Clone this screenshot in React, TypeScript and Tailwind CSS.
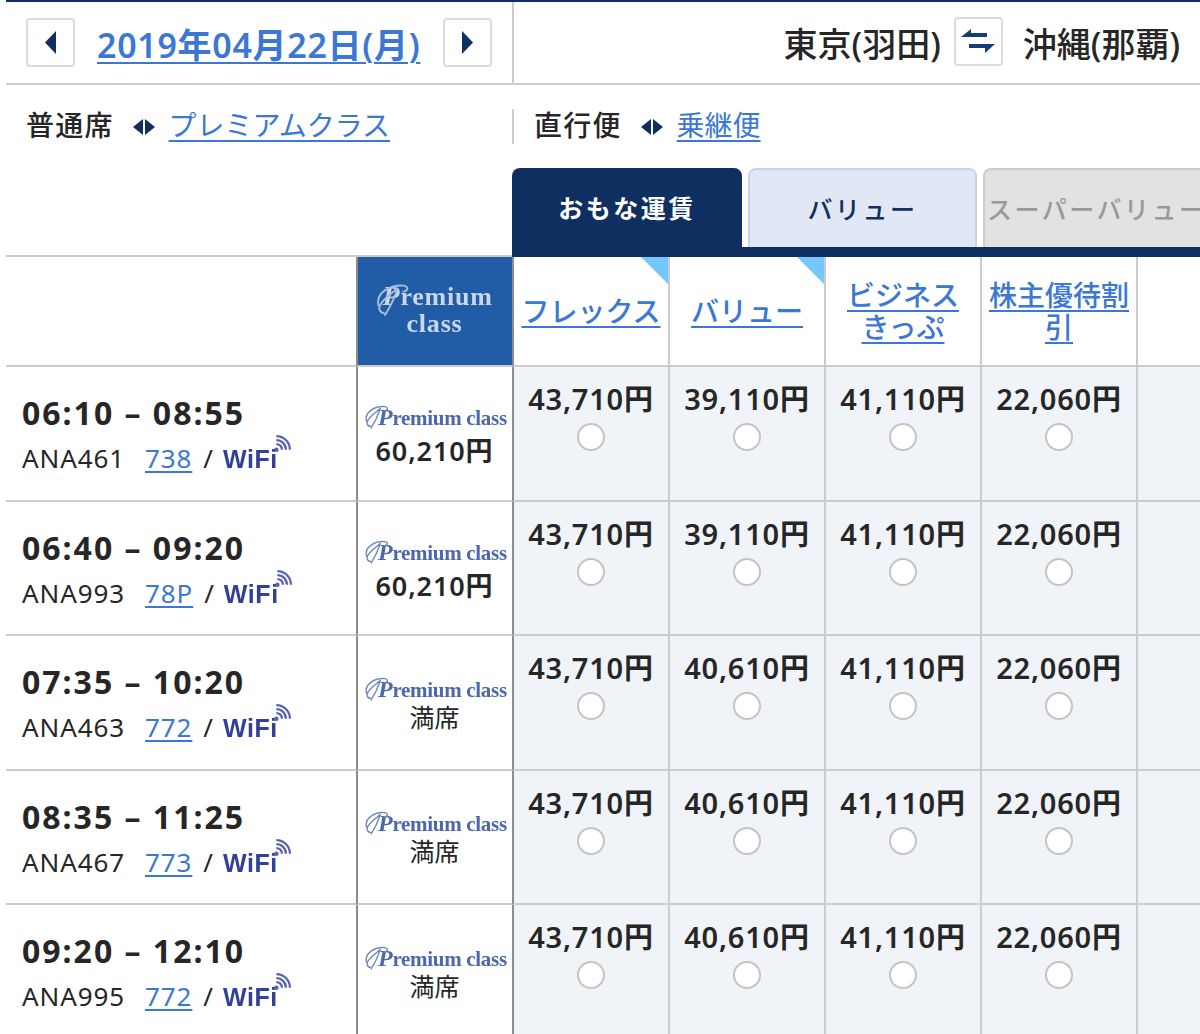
import React from "react";

const rows = [
  { time: "06:10 – 08:55", no: "ANA461", ac: "738", prem: "60,210円", v: "39,110円" },
  { time: "06:40 – 09:20", no: "ANA993", ac: "78P", prem: "60,210円", v: "39,110円" },
  { time: "07:35 – 10:20", no: "ANA463", ac: "772", prem: "満席", v: "40,610円" },
  { time: "08:35 – 11:25", no: "ANA467", ac: "773", prem: "満席", v: "40,610円" },
  { time: "09:20 – 12:10", no: "ANA995", ac: "772", prem: "満席", v: "40,610円" },
];

function Btn({ children }: { children: React.ReactNode }) {
  return (
    <div className="w-[49px] h-[49px] bg-white border-2 border-[#dcdcdc] rounded-[4px] flex items-center justify-center shrink-0">
      {children}
    </div>
  );
}

function Tri({ dir, w, h }: { dir: "l" | "r"; w: number; h: number }) {
  return (
    <svg width={w} height={h} viewBox="0 0 10 20" preserveAspectRatio="none">
      <polygon points={dir === "l" ? "10,0 10,20 0,10" : "0,0 0,20 10,10"} fill="#0f2f60" />
    </svg>
  );
}

function Both() {
  return (
    <div className="flex gap-[2px] items-center ml-[19px] mr-[14px]">
      <Tri dir="l" w={10} h={16} />
      <Tri dir="r" w={10} h={16} />
    </div>
  );
}

function Swirl({ size, color }: { size: number; color: string }) {
  return (
    <svg width={size} height={size} viewBox="0 0 30 30" className="absolute left-0 top-0">
      <path d="M3 20 C0 9 13 2 24 3 C29 4 27 8 23 8 M8 26 C4 26 2 22 5 18 C9 12 16 8 19 5 M19 5 C16 14 12 22 8 28" fill="none" stroke={color} strokeWidth="1.6" />
    </svg>
  );
}

function SmallLogo() {
  return (
    <div className="relative h-[26px] w-[141px] text-[#4c67ab] blur-[0.5px] font-['Liberation_Serif',serif] font-bold text-[21px] leading-[26px] text-left pl-[14px] whitespace-nowrap tracking-[-0.3px]">
      <Swirl size={26} color="#6f86bd" />
      <span className="italic text-[24px]">P</span>remium class
    </div>
  );
}

function WiFi() {
  return (
    <span className="relative inline-block text-[#33409a] blur-[0.3px] font-['Liberation_Sans',sans-serif] font-bold text-[25px] leading-none tracking-[0.6px]">
      WiFi
      <svg width="18" height="18" viewBox="0 0 16 16" className="absolute right-[-13px] top-[-12px]">
        <circle cx="3" cy="13" r="2" fill="#5a64ad" />
        <path d="M3 8 A5 5 0 0 1 8 13 M3 4.5 A8.5 8.5 0 0 1 11.5 13 M3 1 A12 12 0 0 1 15 13" fill="none" stroke="#5a64ad" strokeWidth="2" />
      </svg>
    </span>
  );
}

function Fare({ price, first }: { price: string; first?: boolean }) {
  return (
    <div className={first ? "bg-[#f0f3f8] flex flex-col items-center pt-[11px]" : "bg-[#f0f3f8] border-l-2 border-[#cccccc] flex flex-col items-center pt-[11px]"}>
      <div className="text-[29px] leading-[42px] font-semibold tracking-[0.8px] text-[#262626] whitespace-nowrap">{price}</div>
      <div className="mt-[3px] w-[28px] h-[28px] rounded-full bg-white border-2 border-[#c4c4c4]" />
    </div>
  );
}

function Corner() {
  return (
    <svg width="27" height="27" viewBox="0 0 27 27" className="absolute right-0 top-0">
      <polygon points="0,0 27,0 27,27" fill="#74c6fb" />
    </svg>
  );
}

function FareHead({ lines, corner }: { lines: string[]; corner?: boolean }) {
  return (
    <div className="relative border-l-2 border-[#cccccc] flex flex-col items-center justify-center text-[28px] leading-[32px] font-medium text-[#3a78d4]">
      {lines.map((l) => (
        <span key={l} className="underline underline-offset-[4px] decoration-2 whitespace-nowrap">{l}</span>
      ))}
      {corner && <Corner />}
    </div>
  );
}

export default function App() {
  return (
    <div className="w-[1200px] h-[1034px] overflow-hidden bg-white pl-[6px] font-['Noto_Sans','Noto_Sans_CJK_JP',sans-serif] text-[#262626]">
      <div className="h-[85px] border-t-2 border-b-2 border-t-[#0f2f60] border-b-[#cccccc] flex">
        <div className="w-[508px] border-r-2 border-[#cccccc] flex items-center pl-[20px]">
          <Btn><Tri dir="l" w={11} h={23} /></Btn>
          <a className="ml-[22px] pt-[5px] text-[34px] leading-[44px] font-semibold text-[#3a78d4] underline underline-offset-[4px] decoration-2 whitespace-nowrap tracking-[0.7px] w-[324px]">2019年04月22日(月)</a>
          <div className="ml-[22px]"><Btn><Tri dir="r" w={11} h={23} /></Btn></div>
        </div>
        <div className="flex-1 flex items-center justify-end pr-[20px] text-[34px] font-medium whitespace-nowrap">
          <span className="pt-[4px]">東京(羽田)</span>
          <div className="ml-[13px] mr-[20px] mb-[2px]">
            <Btn>
              <svg width="34" height="25" viewBox="0 0 34 25">
                <polygon points="0,8 10,0 10,4 26,4 26,8" fill="#143c78" />
                <polygon points="8,15 34,15 24,24 24,19 8,19" fill="#143c78" />
              </svg>
            </Btn>
          </div>
          <span className="pt-[4px]">沖縄(那覇)</span>
        </div>
      </div>

      <div className="h-[83px] flex pt-[24px]">
        <div className="w-[508px] h-[35px] flex items-center pl-[20px] text-[28px] border-r-2 border-[#cccccc] whitespace-nowrap">
          <span className="tracking-[1.2px] font-medium -mt-[3px]">普通席</span>
          <Both />
          <a className="text-[#3a78d4] underline underline-offset-[4px] -mt-[3px]">プレミアムクラス</a>
        </div>
        <div className="h-[35px] flex items-center pl-[20px] text-[28px] whitespace-nowrap">
          <span className="tracking-[1.2px] font-medium -mt-[3px]">直行便</span>
          <Both />
          <a className="text-[#3a78d4] underline underline-offset-[4px] -mt-[3px]">乗継便</a>
        </div>
      </div>

      <div className="h-[89px] flex">
        <div className="w-[506px] flex flex-col justify-end">
          <div className="h-[2px] bg-[#cccccc]" />
        </div>
        <div className="flex-1 flex flex-col overflow-hidden">
          <div className="h-[79px] flex gap-[6px] items-end">
            <div className="w-[230px] h-[79px] shrink-0 bg-[#0f2f60] rounded-t-[8px] flex items-center justify-center pt-[3px] text-white text-[25px] font-semibold tracking-[2.5px] whitespace-nowrap">おもな運賃</div>
            <div className="w-[229px] h-[79px] shrink-0 bg-[#e1e7f4] border-2 border-b-0 border-[#c8d3e6] rounded-t-[8px] flex items-center justify-center pt-[2px] text-[#0f2f60] text-[25px] font-medium tracking-[2.5px] whitespace-nowrap">バリュー</div>
            <div className="w-[240px] h-[79px] shrink-0 bg-[#e2e2e2] border-2 border-b-0 border-[#cccccc] rounded-t-[8px] flex items-center pl-[2px] pt-[2px] text-[#999999] text-[25px] font-medium tracking-[2.5px] whitespace-nowrap">スーパーバリュー</div>
          </div>
          <div className="h-[10px] bg-[#0f2f60]" />
        </div>
      </div>

      <div className="grid grid-cols-[350px_156px_156px_156px_156px_156px_70px]">
        <div className="h-[110px] border-b-2 border-[#cccccc]" />
        <div className="border-l-2 border-b-2 border-l-[#8c8c8c] border-b-[#cccccc] bg-[#215ca6] flex items-center justify-center">
          <div className="relative text-[#c9d7ea] blur-[0.5px] font-['Liberation_Serif',serif] font-bold text-[26px] leading-[27px] text-center tracking-[0.8px] w-[118px] pl-[2px] -mt-[3px] -ml-[3px]">
            <Swirl size={36} color="#a9bedd" />
            <span className="italic text-[28px] pl-[6px]">P</span>remium
            <br />
            class
          </div>
        </div>
        <div className="border-l-2 border-[#8c8c8c] border-b-2 border-b-[#cccccc] grid relative">
          <div className="flex items-center justify-center text-[28px] font-medium text-[#3a78d4]">
            <span className="underline underline-offset-[4px] decoration-2 whitespace-nowrap">フレックス</span>
          </div>
          <Corner />
        </div>
        <div className="border-b-2 border-[#cccccc] grid"><FareHead lines={["バリュー"]} corner /></div>
        <div className="border-b-2 border-[#cccccc] grid"><FareHead lines={["ビジネス", "きっぷ"]} /></div>
        <div className="border-b-2 border-[#cccccc] grid"><FareHead lines={["株主優待割", "引"]} /></div>
        <div className="border-b-2 border-l-2 border-[#cccccc]" />

        {rows.map((r) => (
          <React.Fragment key={r.time}>
            <div className="h-[134.5px] border-b-2 border-[#cccccc] pl-[16px] pt-[25px] whitespace-nowrap">
              <div className="text-[32px] leading-[42px] font-bold tracking-[2px]">{r.time}</div>
              <div className="flex items-baseline text-[26px] leading-[46px] mt-[1px] tracking-[0.9px]">
                <span className="w-[123px]">{r.no}</span>
                <a className="text-[#3a78d4] underline underline-offset-[3px]">{r.ac}</a>
                <span className="ml-[11px] mr-[9px]">/</span>
                <WiFi />
              </div>
            </div>
            <div className={r.prem === "満席" ? "border-l-2 border-b-2 border-l-[#8c8c8c] border-b-[#cccccc] flex flex-col items-center justify-center pt-[3px] pr-[1px]" : "border-l-2 border-b-2 border-l-[#8c8c8c] border-b-[#cccccc] flex flex-col items-center justify-center pt-[6px] pr-[1px]"}>
              <SmallLogo />
              {r.prem === "満席" ? (
                <div className="text-[25px] leading-[30px]">{r.prem}</div>
              ) : (
                <div className="text-[27px] leading-[34px] font-semibold tracking-[0.9px] mt-[4px]">{r.prem}</div>
              )}
            </div>
            <div className="border-l-2 border-[#8c8c8c] border-b-2 border-b-[#cccccc] grid"><Fare price="43,710円" first /></div>
            <div className="border-b-2 border-[#cccccc] grid"><Fare price={r.v} /></div>
            <div className="border-b-2 border-[#cccccc] grid"><Fare price="41,110円" /></div>
            <div className="border-b-2 border-[#cccccc] grid"><Fare price="22,060円" /></div>
            <div className="border-b-2 border-l-2 border-[#cccccc] bg-[#f0f3f8]" />
          </React.Fragment>
        ))}
      </div>
    </div>
  );
}
